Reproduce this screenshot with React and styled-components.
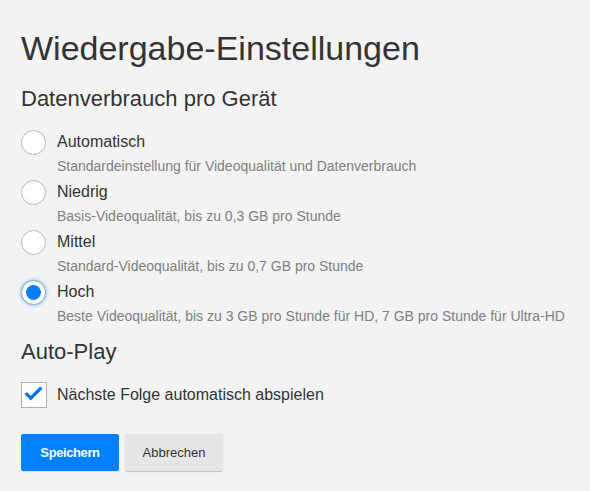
import React, { useState } from "react";
import styled, { createGlobalStyle } from "styled-components";

const GlobalStyle = createGlobalStyle`
  html, body {
    margin: 0;
    background: #f3f3f3;
  }
  body {
    font-family: "Liberation Sans", Arial, sans-serif;
    color: #333;
  }
`;

const Page = styled.div`
  padding: 28px 21px 20px 21px;
`;

const Title = styled.h1`
  margin: 0;
  font-size: 34px;
  line-height: 40px;
  font-weight: 400;
  color: #333;
`;

const SectionTitle = styled.h2`
  margin: ${({ $mt }) => $mt || 18}px 0 0 0;
  font-size: 22px;
  line-height: 26px;
  font-weight: 400;
  color: #333;
`;

const OptionList = styled.div`
  display: flex;
  flex-direction: column;
  gap: 4px;
  margin-top: 18px;
`;

const Option = styled.label`
  display: grid;
  grid-template-columns: 25px 1fr;
  grid-template-rows: 25px 20px;
  column-gap: 11px;
  row-gap: 1px;
  cursor: pointer;
`;

const Radio = styled.span`
  grid-row: 1;
  grid-column: 1;
  align-self: center;
  width: 25px;
  height: 25px;
  box-sizing: border-box;
  border-radius: 50%;
  background: #fff;
  border: 1px solid ${({ $checked }) => ($checked ? "#8fa6bf" : "#b8b8b8")};
  box-shadow: ${({ $checked }) =>
    $checked ? "0 0 3px 1px rgba(0, 128, 255, 0.35)" : "none"};
  display: flex;
  align-items: center;
  justify-content: center;
`;

const Dot = styled.span`
  width: 15px;
  height: 15px;
  border-radius: 50%;
  background: #0080ff;
`;

const Label = styled.span`
  grid-row: 1;
  grid-column: 2;
  font-size: 16px;
  line-height: 24px;
  color: #333;
`;

const Description = styled.span`
  grid-row: 2;
  grid-column: 2;
  font-size: 14px;
  line-height: 20px;
  color: #808080;
`;

const CheckRow = styled.label`
  display: flex;
  align-items: center;
  gap: 10px;
  margin-top: 17px;
  cursor: pointer;
`;

const CheckBox = styled.span`
  width: 26px;
  height: 26px;
  box-sizing: border-box;
  border: 1px solid #b0b0b0;
  background: #fff;
  display: flex;
  align-items: center;
  justify-content: center;
`;

const CheckLabel = styled.span`
  font-size: 16px;
  line-height: 24px;
  color: #333;
`;

const Actions = styled.div`
  display: flex;
  gap: 6px;
  margin-top: 26px;
`;

const Button = styled.button`
  width: 98px;
  height: 37px;
  border: none;
  border-radius: 2px;
  font-family: "Liberation Sans", Arial, sans-serif;
  font-size: 13px;
  cursor: pointer;
  background: ${({ $primary }) => ($primary ? "#0080ff" : "#e6e6e6")};
  color: ${({ $primary }) => ($primary ? "#fff" : "#333")};
  font-weight: ${({ $primary }) => ($primary ? 700 : 400)};
  letter-spacing: ${({ $primary }) => ($primary ? "-0.4px" : "0")};
  box-shadow: ${({ $primary }) =>
    $primary ? "0 1px 0 rgba(0,0,0,0.08)" : "0 1px 1px rgba(0,0,0,0.2)"};
`;

const options = [
  {
    id: "auto",
    label: "Automatisch",
    desc: "Standardeinstellung für Videoqualität und Datenverbrauch",
  },
  {
    id: "low",
    label: "Niedrig",
    desc: "Basis-Videoqualität, bis zu 0,3 GB pro Stunde",
  },
  {
    id: "mid",
    label: "Mittel",
    desc: "Standard-Videoqualität, bis zu 0,7 GB pro Stunde",
  },
  {
    id: "high",
    label: "Hoch",
    desc: "Beste Videoqualität, bis zu 3 GB pro Stunde für HD, 7 GB pro Stunde für Ultra-HD",
  },
];

const App = () => {
  const [quality, setQuality] = useState("high");
  const [autoplay, setAutoplay] = useState(true);

  return (
    <>
      <GlobalStyle />
      <Page>
        <Title>Wiedergabe-Einstellungen</Title>
        <SectionTitle>Datenverbrauch pro Gerät</SectionTitle>
        <OptionList>
          {options.map((o) => (
            <Option key={o.id} onClick={() => setQuality(o.id)}>
              <Radio $checked={quality === o.id}>
                {quality === o.id && <Dot />}
              </Radio>
              <Label>{o.label}</Label>
              <Description>{o.desc}</Description>
            </Option>
          ))}
        </OptionList>

        <SectionTitle $mt={13}>Auto-Play</SectionTitle>
        <CheckRow onClick={() => setAutoplay(!autoplay)}>
          <CheckBox>
            {autoplay && (
              <svg width="26" height="26" viewBox="0 0 26 26">
                <path
                  d="M4 11 L9.5 16.5 L21 5"
                  fill="none"
                  stroke="#0073e6"
                  strokeWidth="3.6"
                />
              </svg>
            )}
          </CheckBox>
          <CheckLabel>Nächste Folge automatisch abspielen</CheckLabel>
        </CheckRow>

        <Actions>
          <Button $primary>Speichern</Button>
          <Button>Abbrechen</Button>
        </Actions>
      </Page>
    </>
  );
};

export default App;
